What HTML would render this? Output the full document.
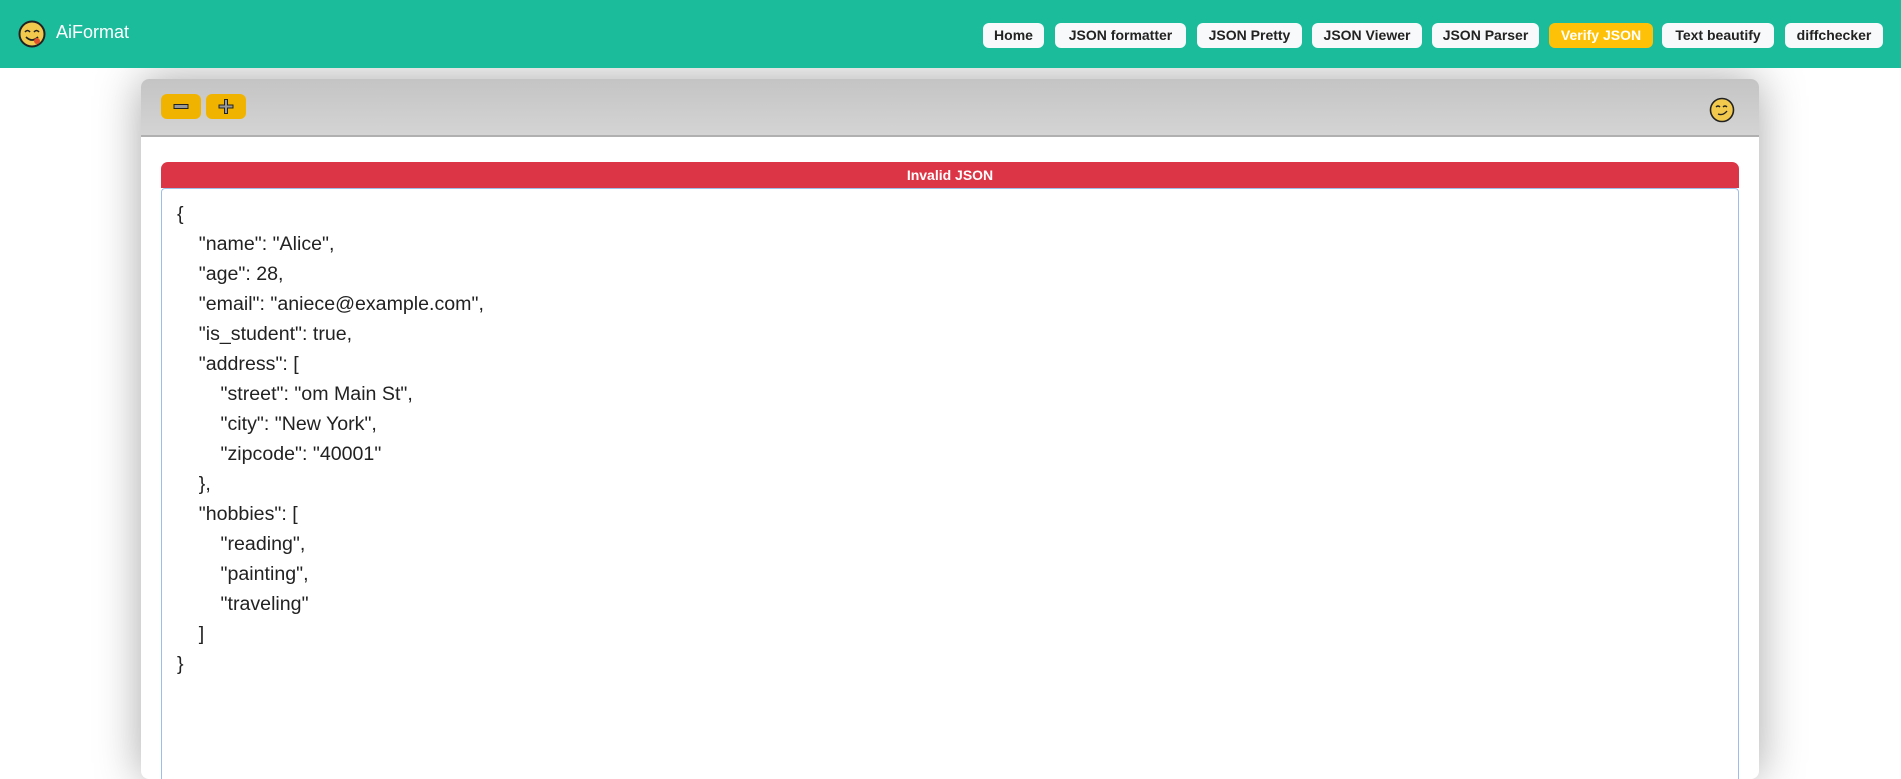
<!DOCTYPE html>
<html><head><meta charset="utf-8"><style>
*{box-sizing:border-box;margin:0;padding:0}
body{width:1901px;height:735px;overflow:hidden;background:#fff;font-family:"Liberation Sans",sans-serif;position:relative}
.hdr{position:absolute;left:0;top:0;width:1901px;height:68px;background:#1abc9c;z-index:2}
.logo{position:absolute;left:56px;top:22px;color:#fff;font-size:18px}
.nav{position:absolute;top:23px;height:25px;background:#f8f9fa;border-radius:6px;font-weight:bold;font-size:14px;color:#222;line-height:25px;text-align:center;white-space:nowrap;overflow:hidden}
.nav.a{background:#ffc107;color:#fff}
.card{position:absolute;left:141px;top:79px;width:1618px;height:700px;background:#fff;border-radius:8px;box-shadow:0 0 45px rgba(0,0,0,.35);overflow:hidden}
.tb{height:58px;background:linear-gradient(#c4c4c4,#d4d4d4);border-bottom:2px solid #b0b0b0}
.btn{position:absolute;top:15px;width:40px;height:25px;background:#f0b400;border-radius:6px}
.err{position:absolute;left:20px;top:83px;width:1578px;height:26px;background:#dc3545;border-radius:7px 7px 0 0;color:#fff;font-weight:bold;font-size:14px;text-align:center;line-height:26px}
.ta{position:absolute;left:20px;top:109px;width:1578px;height:600px;border:1px solid #9bbfe8;border-radius:4px}
pre{position:absolute;left:15px;top:10px;font-family:"Liberation Sans",sans-serif;font-size:19.6px;line-height:30px;color:#222}
</style></head><body>
<div class="hdr">
<svg style="position:absolute;left:18px;top:20px" width="28" height="28" viewBox="0 0 28 28"><circle cx="14" cy="14" r="12.5" fill="#f2c94c" stroke="#222" stroke-width="2"/><path d="M7 12q2.5-3 5 0M16 12q2.5-3 5 0" stroke="#222" stroke-width="1.6" fill="none"/><path d="M8 17q6 6 12 0" stroke="#222" stroke-width="1.6" fill="none"/><circle cx="19" cy="21" r="3" fill="#e0502a"/></svg>
<div class="logo">AiFormat</div>
<div class="nav" style="left:983px;width:61px">Home</div>
<div class="nav" style="left:1055px;width:131px">JSON formatter</div>
<div class="nav" style="left:1197px;width:105px">JSON Pretty</div>
<div class="nav" style="left:1312px;width:110px">JSON Viewer</div>
<div class="nav" style="left:1432px;width:107px">JSON Parser</div>
<div class="nav a" style="left:1549px;width:104px">Verify JSON</div>
<div class="nav" style="left:1662px;width:112px">Text beautify</div>
<div class="nav" style="left:1785px;width:98px">diffchecker</div>
</div>
<div class="card">
<div class="tb"></div>
<div class="btn" style="left:20px"><svg width="40" height="25"><rect x="13" y="10.5" width="14" height="4" fill="#999" stroke="#222"/></svg></div>
<div class="btn" style="left:65px"><svg width="40" height="25"><path d="M18.5 5.5h3v5.5h5.5v3h-5.5v5.5h-3v-5.5h-5.5v-3h5.5z" fill="#999" stroke="#222"/></svg></div>
<svg style="position:absolute;left:1568px;top:18px" width="26" height="26" viewBox="0 0 26 26"><circle cx="13" cy="13" r="11.5" fill="#f2c94c" stroke="#222" stroke-width="1.6"/><path d="M7 10q2-2 4 0M14 10q2-2 4 0M9 17q5 2 9-3" stroke="#222" stroke-width="1.4" fill="none"/></svg>
<div class="err">Invalid JSON</div>
<div class="ta"><pre>{
    "name": "Alice",
    "age": 28,
    "email": "aniece@example.com",
    "is_student": true,
    "address": [
        "street": "om Main St",
        "city": "New York",
        "zipcode": "40001"
    },
    "hobbies": [
        "reading",
        "painting",
        "traveling"
    ]
}</pre></div>
</div>
</body></html>
